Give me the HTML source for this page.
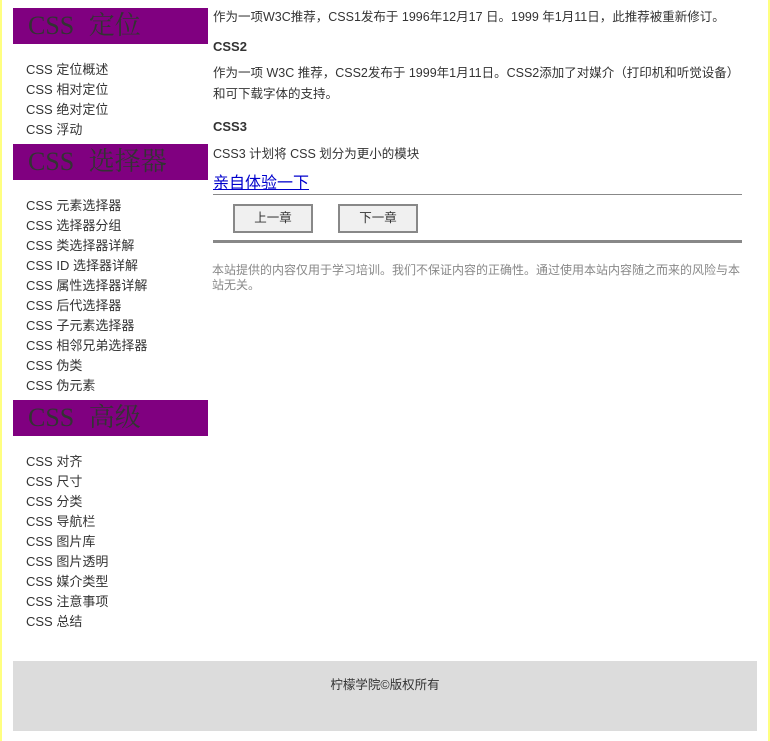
<!DOCTYPE html>
<html><head><meta charset="utf-8"><style>
body{margin:0;width:770px;height:741px;background:#fff;position:relative;overflow:hidden;font-family:"Liberation Sans","Noto Sans CJK SC",sans-serif;color:#333}
.yl{position:absolute;top:0;bottom:0;width:2px;background:#ffff80}
.h{position:absolute;left:13px;width:195px;height:36px;background:#800080;font-family:"Liberation Serif","Noto Serif CJK SC",serif;font-size:26px;line-height:36px;color:#333;padding-left:15px;box-sizing:border-box;word-spacing:8px;white-space:nowrap;overflow:hidden}
.l{position:absolute;left:26px;font-size:13px;line-height:20px;color:#333}
.t{position:absolute;left:213px;font-size:12.5px;color:#333;white-space:nowrap}
b.t{font-size:13px}
.btn{position:absolute;top:204px;width:76px;height:25px;border:2px solid #888;background:#f0f0f0;font-size:12.5px;text-align:center;line-height:25px;color:#333}
</style></head><body>
<div class="yl" style="left:0"></div><div class="yl" style="right:0"></div>
<div class="h" style="top:8px">CSS 定位</div>
<div class="l" style="top:60px">CSS 定位概述<br>CSS 相对定位<br>CSS 绝对定位<br>CSS 浮动</div>
<div class="h" style="top:144px">CSS 选择器</div>
<div class="l" style="top:196px">CSS 元素选择器<br>CSS 选择器分组<br>CSS 类选择器详解<br>CSS ID 选择器详解<br>CSS 属性选择器详解<br>CSS 后代选择器<br>CSS 子元素选择器<br>CSS 相邻兄弟选择器<br>CSS 伪类<br>CSS 伪元素</div>
<div class="h" style="top:400px">CSS 高级</div>
<div class="l" style="top:452px">CSS 对齐<br>CSS 尺寸<br>CSS 分类<br>CSS 导航栏<br>CSS 图片库<br>CSS 图片透明<br>CSS 媒介类型<br>CSS 注意事项<br>CSS 总结</div>
<div class="t" style="top:6px">作为一项W3C推荐，CSS1发布于 1996年12月17 日。1999 年1月11日，此推荐被重新修订。</div>
<b class="t" style="top:39px">CSS2</b>
<div class="t" style="top:63px;line-height:21px">作为一项 W3C 推荐，CSS2发布于 1999年1月11日。CSS2添加了对媒介（打印机和听觉设备）<br>和可下载字体的支持。</div>
<b class="t" style="top:119px">CSS3</b>
<div class="t" style="top:143px">CSS3 计划将 CSS 划分为更小的模块</div>
<a class="t" style="top:169px;font-size:16px;color:#00c;text-decoration:underline">亲自体验一下</a>
<div style="position:absolute;left:213px;top:194px;width:529px;height:1px;background:#888"></div>
<div class="btn" style="left:233px">上一章</div>
<div class="btn" style="left:338px">下一章</div>
<div style="position:absolute;left:213px;top:240px;width:529px;height:3px;background:#888"></div>
<div style="position:absolute;left:212px;top:263px;width:532px;font-size:12px;line-height:15px;color:#888">本站提供的内容仅用于学习培训。我们不保证内容的正确性。通过使用本站内容随之而来的风险与本站无关。</div>
<div style="position:absolute;left:13px;top:661px;width:744px;height:70px;background:#dcdcdc;text-align:center;font-size:12.5px;line-height:48px;color:#333">柠檬学院©版权所有</div>
</body></html>
